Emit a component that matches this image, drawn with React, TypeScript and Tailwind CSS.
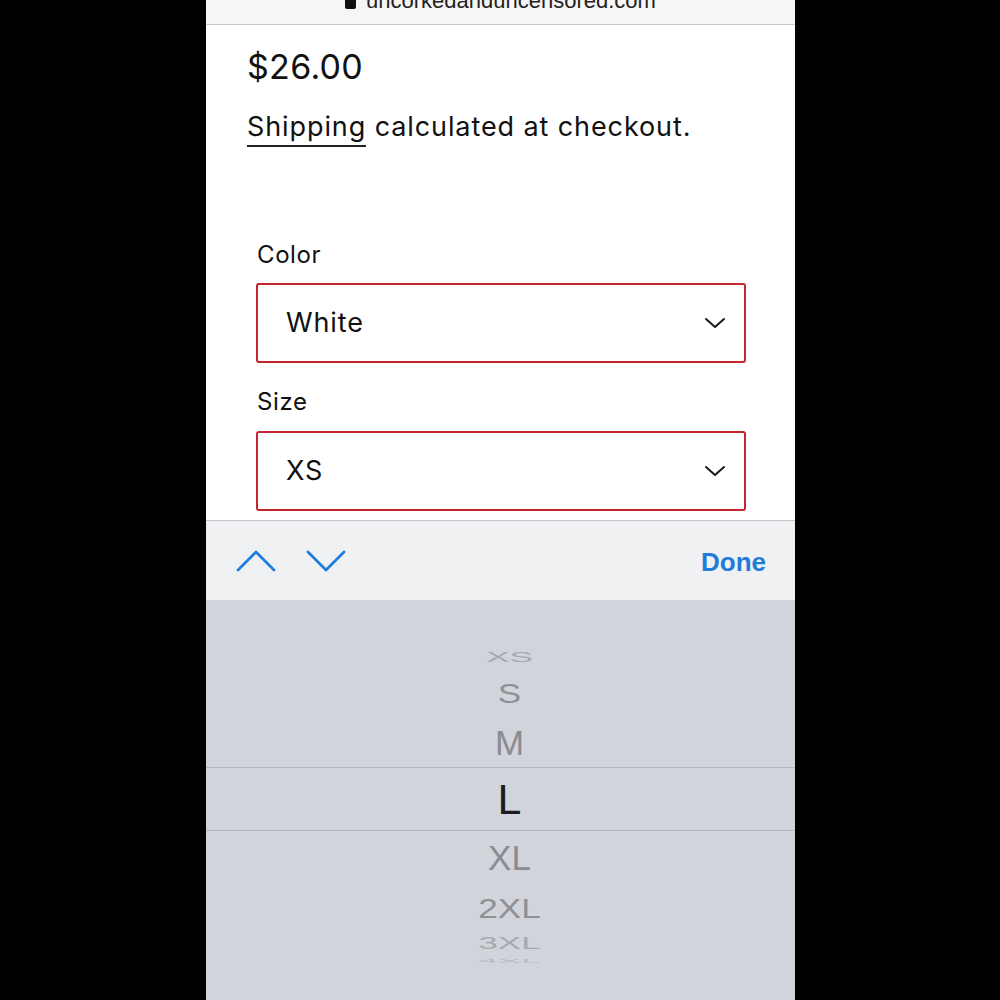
const sizes = [
    { label: 'XS', h: 'h-[34px]', scale: 'scale-y-[0.44]', color: 'text-[#a6a9ae]', pad: '' },
    { label: 'S', h: 'h-[38px]', scale: 'scale-y-[0.8]', color: 'text-[#8e9095]', pad: '' },
    { label: 'M', h: 'h-[56px]', scale: 'scale-y-[1]', color: 'text-[#8a8c91]', pad: 'pt-[6px]' },
];

const below = [
    { label: 'XL', h: 'h-[52px]', scale: 'scale-y-[1]', color: 'text-[#8a8c91]' },
    { label: '2XL', h: 'h-[48px]', scale: 'scale-y-[0.8]', color: 'text-[#8e9095]' },
    { label: '3XL', h: 'h-[24px]', scale: 'scale-y-[0.48]', color: 'text-[#a6a9ae]' },
    { label: '4XL', h: 'h-[10px]', scale: 'scale-y-[0.16]', color: 'text-[#b8bbc0]' },
];

const SelectBox = ({ value }: { value: string }) => (
    <div className="h-[80px] w-[490px] rounded-[3px] border-2 border-[#c4262e] flex items-center justify-between pl-[28px] pr-[18px] bg-white">
        <span className="text-[27px] tracking-[0.9px] text-[#111]">{value}</span>
        <svg width="22" height="14" viewBox="0 0 22 14" fill="none" stroke="#1a1a1a" strokeWidth="2" strokeLinecap="round" strokeLinejoin="round">
            <path d="M2 3 L11 11 L20 3" />
        </svg>
    </div>
);

export default function App() {
    return (
        <div className="w-[1000px] h-[1000px] bg-black overflow-hidden">
            <div className="ml-[206px] w-[589px] h-[1000px] flex flex-col bg-white font-['Inter',sans-serif]">
                {/* address bar, mostly scrolled off */}
                <div className="h-[25px] shrink-0 bg-[#f6f6f6] border-b border-[#c9c9c9] overflow-hidden flex justify-center">
                    <div className="flex items-start gap-[10px] -mt-[10px]">
                        <div className="w-[11px] h-[17px] bg-[#111] rounded-[2px] mt-[2px]" />
                        <span className="text-[22px] leading-[22px] text-[#222] font-['Liberation_Sans',sans-serif]">uncorkedanduncensored.com</span>
                    </div>
                </div>

                <div className="pl-[41px] pt-[22px]">
                    <div className="text-[34px] leading-[40px] tracking-[0.3px] text-[#111]">$26.00</div>
                    <div className="mt-[24px] text-[27px] leading-[32px] text-[#111] tracking-[0.9px]">
                        <span className="border-b-2 border-[#222] pb-[2px]">Shipping</span> calculated at checkout.
                    </div>
                </div>

                <div className="pl-[50px] pt-[98px] flex flex-col">
                    <div className="text-[24px] leading-[28px] tracking-[0.6px] text-[#111] ml-px">Color</div>
                    <div className="mt-[14px]">
                        <SelectBox value="White" />
                    </div>
                    <div className="mt-[25px] text-[24px] leading-[28px] tracking-[0.6px] text-[#111] ml-px">Size</div>
                    <div className="mt-[15px]">
                        <SelectBox value="XS" />
                    </div>
                </div>

                <div className="mt-[9px] h-[80px] shrink-0 bg-[#f0f1f3] border-t border-[#c4c6ca] flex items-center justify-between pl-[30px] pr-[29px]">
                    <div className="flex items-center gap-[30px]">
                        <svg width="40" height="24" viewBox="0 0 40 24" fill="none" stroke="#1f7dd9" strokeWidth="2.8" strokeLinecap="round" strokeLinejoin="round">
                            <path d="M2 21 L20 3 L38 21" />
                        </svg>
                        <svg width="40" height="24" viewBox="0 0 40 24" fill="none" stroke="#1f7dd9" strokeWidth="2.8" strokeLinecap="round" strokeLinejoin="round">
                            <path d="M2 3 L20 21 L38 3" />
                        </svg>
                    </div>
                    <span className="text-[26px] pt-[4px] font-semibold text-[#1f7dd9] font-['Liberation_Sans',sans-serif]">Done</span>
                </div>

                <div className="flex-1 bg-[#d1d4da] pt-[39px] pl-[18px] flex flex-col font-['Liberation_Sans',sans-serif]">
                    {sizes.map((s) => (
                        <div key={s.label} className={`${s.h} ${s.pad} flex items-center justify-center`}>
                            <span className={`text-[35px] leading-none ${s.color} ${s.scale}`}>{s.label}</span>
                        </div>
                    ))}
                    <div className="h-[64px] -ml-[18px] border-y border-[#b3b6bc] flex items-center justify-center pl-[18px]">
                        <span className="text-[43px] leading-none text-[#1c1c1e]">L</span>
                    </div>
                    {below.map((s) => (
                        <div key={s.label} className={`${s.h} flex items-center justify-center`}>
                            <span className={`text-[35px] leading-none ${s.color} ${s.scale}`}>{s.label}</span>
                        </div>
                    ))}
                </div>
            </div>
        </div>
    );
}
